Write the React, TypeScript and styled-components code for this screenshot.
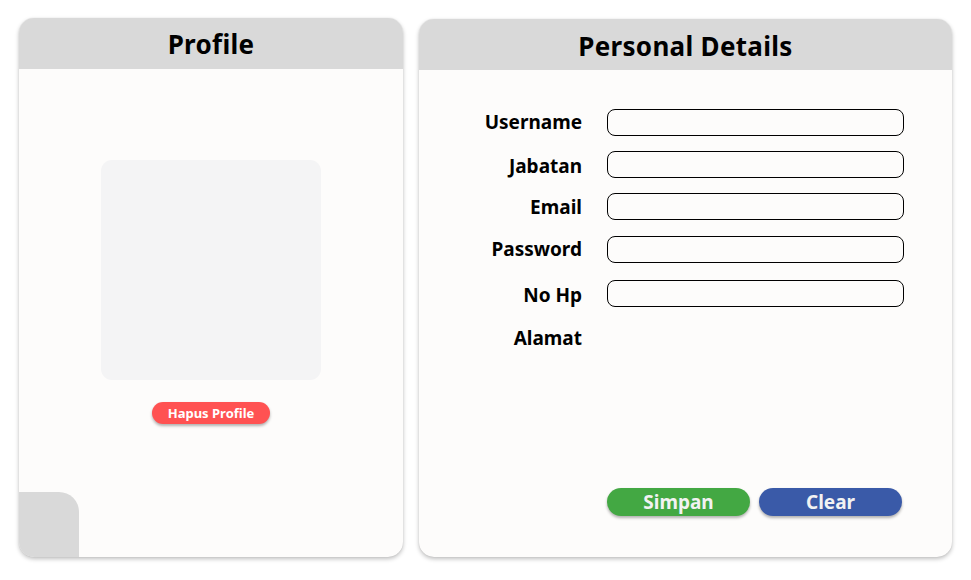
import React from "react";
import styled, { createGlobalStyle } from "styled-components";

const Global = createGlobalStyle`
  html, body { margin: 0; padding: 0; background: #ffffff; }
  body { font-family: "Noto Sans", "Open Sans", sans-serif; }
  * { box-sizing: border-box; }
`;

const Page = styled.div`
  display: flex;
  align-items: flex-start;
  gap: 16px;
  padding: 18px 0 0 19px;
  width: 971px;
  height: 580px;
`;

const Card = styled.section<{ $w: number; $h: number; $top?: number }>`
  width: ${(p) => p.$w}px;
  height: ${(p) => p.$h}px;
  margin-top: ${(p) => p.$top ?? 0}px;
  background: #fdfcfb;
  border-radius: 15px;
  box-shadow: 0 2px 4px rgba(0, 0, 0, 0.25), 0 0 1px rgba(0, 0, 0, 0.15);
  overflow: hidden;
  display: flex;
  flex-direction: column;
  position: relative;
`;

const Header = styled.header<{ $shift?: number }>`
  height: 51px;
  flex: none;
  background: #d9d9d9;
  display: flex;
  align-items: center;
  justify-content: center;
  padding-top: ${(p) => p.$shift ?? 0}px;
  font-size: 26px;
  letter-spacing: 0.3px;
  font-weight: 700;
  color: #000;
`;

const ProfileBody = styled.div`
  flex: 1;
  display: flex;
  flex-direction: column;
  align-items: center;
  padding-top: 91px;
`;

const Avatar = styled.div`
  width: 220px;
  height: 220px;
  background: #f4f4f5;
  border-radius: 11px;
`;

const DangerButton = styled.button`
  margin-top: 22px;
  width: 118px;
  height: 22px;
  border: none;
  border-radius: 11px;
  background: #ff5252;
  color: #fff;
  font-family: inherit;
  font-size: 13px;
  font-weight: 700;
  padding: 0;
  box-shadow: 0 2px 3px rgba(0, 0, 0, 0.3);
`;

const CornerTab = styled.div`
  position: absolute;
  left: 0;
  bottom: 0;
  width: 60px;
  height: 65px;
  background: #d9d9d9;
  border-top-right-radius: 20px;
`;

const FormBody = styled.div`
  flex: 1;
  display: flex;
  flex-direction: column;
  padding: 39px 0 0 0;
`;

const Row = styled.div<{ $mt: number }>`
  display: grid;
  grid-template-columns: 163px 297px;
  column-gap: 25px;
  align-items: center;
  height: 27px;
  margin-top: ${(p) => p.$mt}px;
`;

const Label = styled.label<{ $dy: number }>`
  text-align: right;
  font-size: 19px;
  font-weight: 700;
  color: #000;
  transform: translateY(${(p) => p.$dy}px);
`;

const Input = styled.input`
  width: 297px;
  height: 27px;
  border: 1px solid #000;
  border-radius: 8px;
  background: #fdfcfb;
  padding: 0 8px;
  font-family: inherit;
`;

const Actions = styled.div`
  margin-top: auto;
  margin-bottom: 41px;
  padding-left: 188px;
  display: flex;
  gap: 9px;
`;

const ActionButton = styled.button<{ $bg: string }>`
  width: 143px;
  height: 28px;
  border: none;
  border-radius: 14px;
  background: ${(p) => p.$bg};
  color: #f2f2f2;
  font-family: inherit;
  font-size: 19px;
  font-weight: 700;
  padding: 0;
  box-shadow: 0 2px 3px rgba(0, 0, 0, 0.3);
`;

const fields: { label: string; mt: number; dy: number; input: boolean }[] = [
  { label: "Username", mt: 0, dy: -1, input: true },
  { label: "Jabatan", mt: 15, dy: 1, input: true },
  { label: "Email", mt: 15, dy: 0, input: true },
  { label: "Password", mt: 16, dy: -1, input: true },
  { label: "No Hp", mt: 17, dy: 1, input: true },
  { label: "Alamat", mt: 16, dy: 1, input: false },
];

export default function App() {
  return (
    <>
      <Global />
      <Page>
        <Card $w={384} $h={539}>
          <Header>Profile</Header>
          <ProfileBody>
            <Avatar />
            <DangerButton>Hapus Profile</DangerButton>
          </ProfileBody>
          <CornerTab />
        </Card>
        <Card $w={533} $h={538} $top={1}>
          <Header $shift={3}>Personal Details</Header>
          <FormBody>
            {fields.map((f) => (
              <Row key={f.label} $mt={f.mt}>
                <Label $dy={f.dy}>{f.label}</Label>
                {f.input ? <Input /> : <span />}
              </Row>
            ))}
            <Actions>
              <ActionButton $bg="#43a843">Simpan</ActionButton>
              <ActionButton $bg="#3a5aa8">Clear</ActionButton>
            </Actions>
          </FormBody>
        </Card>
      </Page>
    </>
  );
}
